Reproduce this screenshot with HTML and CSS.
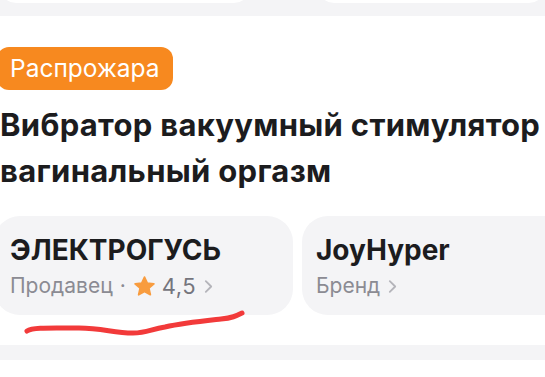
FILE: index.html
```html
<!DOCTYPE html>
<html lang="ru">
  <head>
    <title>Товар</title>
    <meta charset="UTF-8" />
    <meta name="viewport" content="width=device-width, initial-scale=1.0" />
    <link rel="stylesheet" href="styles.css">
  </head>
  <body>
    <div class="top-band">
      <div class="tab tab-left"></div>
      <div class="tab"></div>
    </div>

    <div class="product">
      <span class="badge">Распрожара</span>
      <h1 class="title">Вибратор вакуумный стимулятор вагинальный оргазм</h1>

      <div class="cards">
        <a class="card" href="#">
          <div class="card-name">ЭЛЕКТРОГУСЬ</div>
          <div class="card-meta">
            Продавец <span class="dot">·</span>
            <svg class="star" viewBox="0 0 24 24" width="23" height="23">
              <path d="M12 2.2l2.9 6.3 6.9.7-5.2 4.6 1.5 6.8L12 17.1l-6.1 3.5 1.5-6.8L2.2 9.2l6.9-.7z" fill="#f89c3f" stroke="#f89c3f" stroke-width="1.8" stroke-linejoin="round"/>
            </svg>
            <span class="rating">4,5</span>
            <svg class="chevron" viewBox="0 0 10 16" width="9" height="15">
              <path d="M2 2l6 6-6 6" fill="none" stroke="#b4b4ba" stroke-width="2" stroke-linecap="round" stroke-linejoin="round"/>
            </svg>
          </div>
        </a>
        <a class="card" href="#">
          <div class="card-name">JoyHyper</div>
          <div class="card-meta">
            Бренд
            <svg class="chevron" viewBox="0 0 10 16" width="9" height="15">
              <path d="M2 2l6 6-6 6" fill="none" stroke="#b4b4ba" stroke-width="2" stroke-linecap="round" stroke-linejoin="round"/>
            </svg>
          </div>
        </a>
      </div>

      <!-- hand-drawn underline -->
      <svg class="scribble" viewBox="0 0 230 30" width="230" height="30">
        <path d="M4 24 C10 20, 28 21, 56 21 C80 21, 90 26, 110 26 C124 26, 128 22, 142 20 C160 16, 180 14, 198 12 C209 11, 213 9, 219 6" fill="none" stroke="#f23a3a" stroke-width="5" stroke-linecap="round"/>
      </svg>
    </div>

    <div class="bottom-band"></div>
  </body>
</html>
```

FILE: styles.css
```css
body {
  margin: 0;
  background: #fff;
  font-family: Inter, Roboto, "Liberation Sans", sans-serif;
  color: #1c1c1e;
  overflow: hidden;
}
.top-band {
  height: 16px;
  background: #f4f4f6;
  display: flex;
  gap: 68px;
  overflow: hidden;
}
.tab {
  flex: 1;
  height: 20px;
  margin-top: -17px;
  background: #fff;
  border-radius: 0 0 16px 16px;
}
.tab-left {
  flex: 0 0 250px;
}
.product {
  position: relative;
  padding: 31px 0 30px;
}
.badge {
  display: inline-block;
  margin-left: -3px;
  padding: 0 13px;
  height: 43px;
  line-height: 43px;
  background: #f7891f;
  color: #fff;
  font-size: 24.5px;
  border-radius: 12px;
}
.title {
  margin: 12px 0 0;
  font-size: 31px;
  line-height: 46px;
  font-weight: 700;
  letter-spacing: 0.3px;
}
.cards {
  display: flex;
  gap: 9px;
  margin: 22px 0 0 -6px;
}
.card {
  flex: 0 0 299px;
  height: 99px;
  box-sizing: border-box;
  padding: 18px 16px 0;
  background: #f4f4f6;
  border-radius: 26px;
  color: inherit;
  text-decoration: none;
}
.card + .card {
  padding-left: 14px;
}
.card-name {
  font-size: 28px;
  font-weight: 700;
  line-height: 32px;
}
.card-meta {
  display: flex;
  align-items: center;
  margin-top: 7px;
  font-size: 21px;
  line-height: 26px;
  color: #8b8b93;
  white-space: nowrap;
}
.dot {
  margin: 0 7px;
}
.star {
  margin-right: 6px;
}
.rating {
  color: #75757d;
  font-size: 22px;
  letter-spacing: 0.5px;
}
.chevron {
  margin-left: 8px;
}
.scribble {
  position: absolute;
  left: 23px;
  top: 291px;
}
.bottom-band {
  height: 15px;
  background: #f4f4f6;
}
```
